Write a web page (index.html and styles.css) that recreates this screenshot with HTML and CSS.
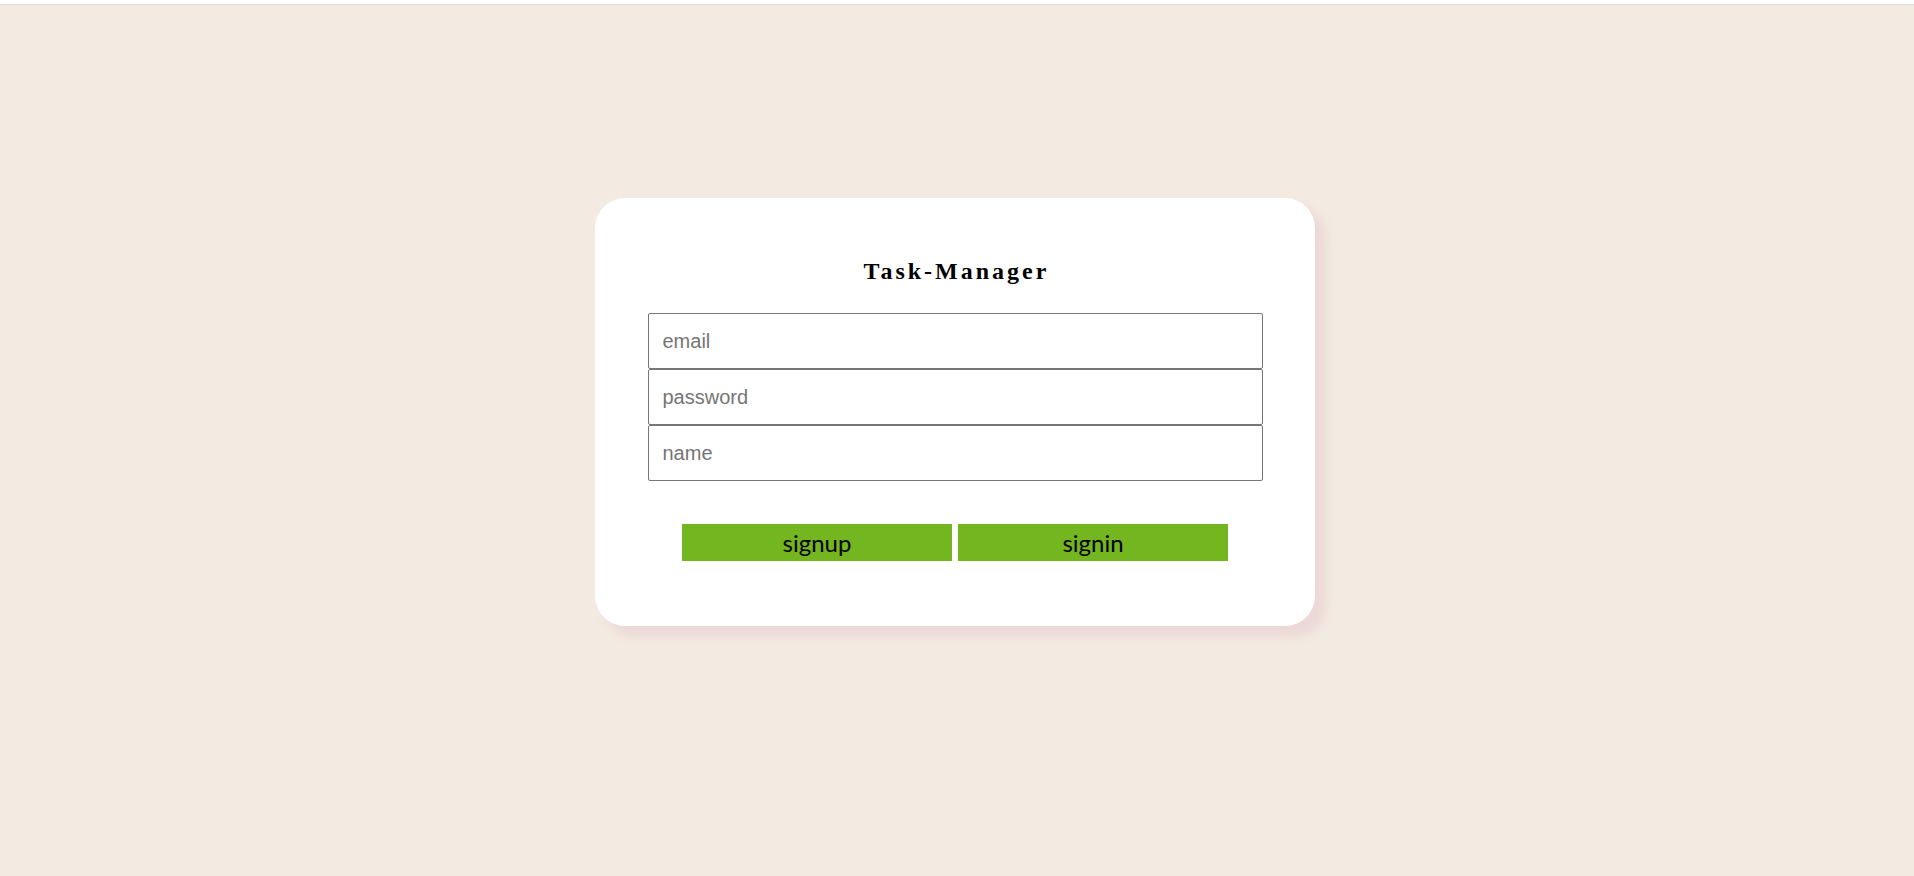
FILE: index.html
```html
<!DOCTYPE html>
<html lang="en">
<head>
<meta charset="utf-8">
<title>Task-Manager</title>
<link rel="stylesheet" href="styles.css">
</head>
<body>
<div class="topbar"></div>
<main class="page">
  <form class="card">
    <h1 class="title">Task-Manager</h1>
    <div class="fields">
      <input class="field" type="email" placeholder="email">
      <input class="field" type="password" placeholder="password">
      <input class="field" type="text" placeholder="name">
    </div>
    <div class="actions">
      <button type="button" class="btn">signup</button>
      <button type="button" class="btn">signin</button>
    </div>
  </form>
</main>
</body>
</html>
```

FILE: styles.css
```css
html, body {
  margin: 0;
  padding: 0;
}
body {
  background: #f3ebe1;
  min-height: 876px;
  font-family: "Liberation Sans", Arial, sans-serif;
}
.topbar {
  height: 4px;
  background: #ffffff;
  border-bottom: 1px solid #dcdcdc;
}
.page {
  display: flex;
  justify-content: center;
  padding: 193px 4px 0 0;
}
.card {
  width: 720px;
  box-sizing: border-box;
  background: #ffffff;
  border-radius: 30px;
  box-shadow: 10px 10px 12px 1px #ebd8d7;
  padding: 59px 0 65px;
  display: flex;
  flex-direction: column;
  align-items: center;
}
.title {
  margin: 0;
  padding-left: 3px;
  font-family: "Liberation Serif", "Times New Roman", serif;
  font-weight: bold;
  font-size: 24px;
  line-height: 28px;
  letter-spacing: 3px;
  color: #000;
}
.fields {
  margin-top: 28px;
  display: flex;
  flex-direction: column;
  width: 615px;
}
.field {
  box-sizing: border-box;
  height: 56px;
  width: 100%;
  margin: 0;
  border: 1px solid #767676;
  border-radius: 2px;
  padding: 0 14px;
  font-family: "Liberation Sans", Arial, sans-serif;
  font-size: 20px;
  color: #000;
  background: #fff;
}
.field::placeholder {
  color: #757575;
}
.actions {
  margin-top: 43px;
  display: flex;
  gap: 6px;
}
.btn {
  width: 270px;
  height: 37px;
  border: none;
  margin: 0;
  padding: 0;
  background: #73b61f;
  color: #000;
  font-family: Lato, "Open Sans", sans-serif;
  font-size: 24px;
  cursor: pointer;
}
```
